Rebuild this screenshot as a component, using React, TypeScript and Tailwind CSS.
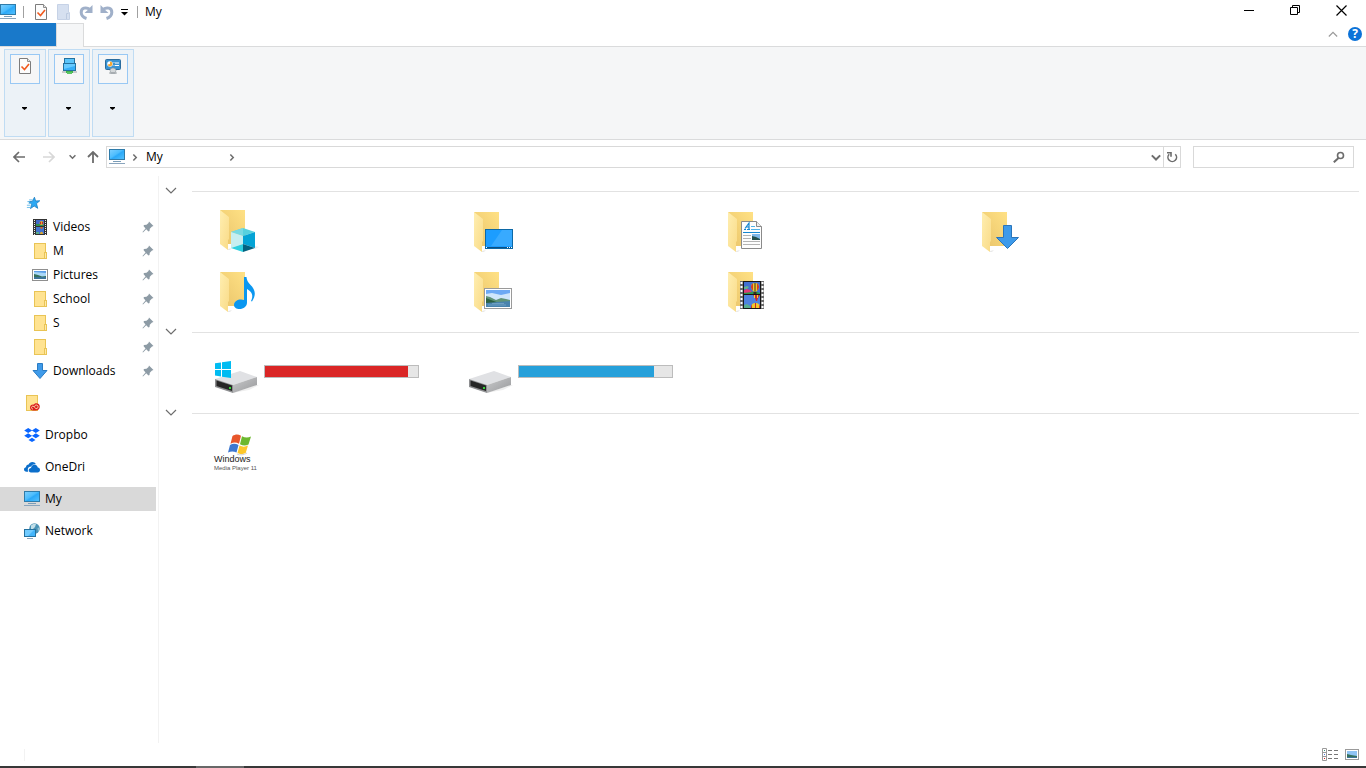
import type { ReactNode } from "react";

/* ---------- small icons ---------- */

function PcIcon() {
  return (
    <svg width="16" height="16" viewBox="0 0 16 16" className="shrink-0">
      <defs>
        <linearGradient id="pcScreen" x1="0" y1="0" x2="1" y2="1">
          <stop offset="0" stopColor="#7fd0ff" />
          <stop offset="0.45" stopColor="#4dbdfd" />
          <stop offset="0.55" stopColor="#2ba9f8" />
          <stop offset="1" stopColor="#55c2ff" />
        </linearGradient>
      </defs>
      <rect x="0.5" y="0.5" width="15" height="10" fill="url(#pcScreen)" stroke="#2f7ba9" />
      <rect x="4" y="12" width="8" height="1" fill="#7a9db8" />
      <rect x="0" y="14" width="16" height="1" fill="#8aa5bd" />
    </svg>
  );
}

function CheckDocIcon() {
  return (
    <svg width="16" height="16" viewBox="0 0 16 16" className="shrink-0">
      <path d="M2.500.5h8l3 3v12h-11z" fill="#fcfcfc" stroke="#7c7c7c" />
      <path d="M10.500.5v3h3" fill="#e8e8e8" stroke="#8e8e8e" />
      <path d="M4.500 8.500l3 3 4.500-5.500" fill="none" stroke="#f1591d" strokeWidth="1.600" />
    </svg>
  );
}

function PaleFolderIcon() {
  return (
    <svg width="16" height="16" viewBox="0 0 16 16">
      <path d="M1.500.5h11v8h1v7h-12z" fill="#d6e0f0" stroke="#c6d2e6" />
      <path d="M10.500 15V9.500h2" fill="none" stroke="#bccae0" />
    </svg>
  );
}

function UndoIcon({ flip = false }: { flip?: boolean }) {
  return (
    <svg width="14" height="16" viewBox="0 0 14 16" className={flip ? "-scale-x-100" : ""}>
      <path d="M3 5.500C7 2.500 12 4 11.800 8.500C11.700 11.500 9.500 13.500 6.500 14.500" fill="none" stroke="#a0b0c9" strokeWidth="3" />
      <path d="M.5 1v8h8l-3-2.800L3 3.500z" fill="#a0b0c9" />
    </svg>
  );
}

function DriveMapIcon() {
  return (
    <svg width="16" height="16" viewBox="0 0 16 16">
      <rect x="3.500" y=".5" width="10" height="5" fill="#5ac4fa" stroke="#24719f" />
      <rect x="2.500" y="5.500" width="12" height="7" fill="#35aef8" stroke="#24719f" />
      <path d="M3 6h11v2L3 11z" fill="#66caff" />
      <rect x="1" y="13" width="15" height="2" fill="#c9cccd" />
      <rect x="5" y="13" width="7" height="2" fill="#3fb54a" />
      <rect x="6" y="14" width="5" height="2" fill="#5cc466" />
    </svg>
  );
}

function SettingsScreenIcon() {
  return (
    <svg width="16" height="16" viewBox="0 0 16 16">
      <rect x=".5" y="1.500" width="15" height="10" rx="1" fill="#3a94d3" stroke="#2b6c9e" />
      <circle cx="5" cy="6" r="2.800" fill="#fff" />
      <path d="M5 6V3.600A2.400 2.400 0 1 1 2.700 6.500z" fill="#f5a733" />
      <path d="M10 5h4M10 7.500h4" stroke="#fff" />
      <path d="M8.500 4.500h1M8.500 7.500h1" stroke="#cbe5f8" />
      <ellipse cx="8" cy="12.500" rx="3" ry="2.500" fill="#d4d8da" stroke="#8b959c" strokeWidth=".6" />
      <ellipse cx="8" cy="15" rx="4" ry="1" fill="#a7adb1" />
    </svg>
  );
}

function StarIcon() {
  return (
    <svg width="16" height="16" viewBox="0 -1 18 18">
      <path d="M9.500 1.500l1.300 4.200 4.700-.2-3.700 3.200 1.400 5.300-4-2.600-4.200 2.900 1.500-5L3 6.500l4.200-.4z" fill="#2ba8f3" stroke="#1b7cc0" strokeWidth=".9" />
      <path d="M3.500 4.500h4M1.500 6.500h3M3 8.500h3M1 10.500h4M1 13h4" stroke="#61b9ea" />
    </svg>
  );
}

function SmallFolderIcon({ children }: { children?: ReactNode }) {
  return (
    <svg width="16" height="16" viewBox="0 0 16 16">
      <rect x="2.500" y=".5" width="11" height="15" fill="#ffe391" stroke="#e9c455" />
      {children ?? <rect x="12.500" y="9.500" width="2" height="6" fill="#ffe9a8" stroke="#e9c455" />}
    </svg>
  );
}

function CreativeCloudIcon() {
  return (
    <SmallFolderIcon>
      <path d="M6 12.500c0-2.500 2-3.500 4-3 1-2 5.800-1.500 5.800 2 0 2.500-1.800 4-4 4H9c-2 0-3-1.200-3-3z" fill="#da1f1f" />
      <path d="M13 13.500c1.500-.5 1.600-3-.2-3.400-1.500-.3-2.300.8-2.300 1.800M9 14c-2 0-2-2.800 0-2.800 1.200 0 2 2.800 4 2.500" fill="none" stroke="#ffe0b0" strokeWidth=".9" />
    </SmallFolderIcon>
  );
}

function Balloon({ x, y }: { x: number; y: number }) {
  return (
    <g transform={`translate(${x} ${y})`}>
      <path d="M-4 0a4 4 0 0 1 8 0c0 2-2 3.500-2.500 4.500h-3C-2 3.500-4 2-4 0z" fill="#f0c92c" />
      <path d="M-4 0c0-2 1-3 2-3.500V3.500C-3 2.500-4 1.500-4 0zM4 0c0-2-1-3-2-3.500V3.500C3 2.500 4 1.500 4 0z" fill="#d33a2a" />
      <path d="M-.5 -4h1v8.500h-1z" fill="#3a2c20" />
      <rect x="-1.500" y="5" width="3" height="2" fill="#3c2a22" />
    </g>
  );
}

function FilmArt() {
  return (
    <>
      <rect x="20" y="13" width="24" height="28" fill="#6a6a6a" />
      <rect x="23" y="13" width="18" height="28" fill="#161616" />
      <path d="M21.500 14v27M42.500 14v27" stroke="#fff" strokeWidth="2" strokeDasharray="2 2" />
      <rect x="24" y="14" width="16" height="12" fill="#416fd2" />
      <rect x="24" y="27" width="16" height="13" fill="#4e82df" />
      <path d="M24 24l4-2 4 2 3-1 5 2v1H24z" fill="#2b9a4a" />
      <path d="M24 22l3-1 3 1 2 2-8 1z" fill="#dd3b78" />
      <path d="M24 19l3-1 2 1-2 2h-3z" fill="#63b38d" />
      <Balloon x={35} y={19} />
      <path d="M33 27h7l-2 3-1 3h-1l-1-3z" fill="#c92a30" />
      <path d="M34 27h1v3h-1zM37 27h1v3h-1z" fill="#f6d62a" />
      <path d="M24 37l3-1 3 2v2h-6z" fill="#58ae91" />
      <path d="M31 40c0-4 2-5 4.500-5s4.500 1 4.500 5z" fill="#f0c92c" />
      <path d="M31 40c0-2 .5-3 1-3.500V40zM35 35h1v5h-1zM39 36.500c.5.500 1 1.500 1 3.500h-1z" fill="#c92a30" />
    </>
  );
}

function VideoIcon() {
  return (
    <svg width="16" height="16" viewBox="0 0 16 16">
      <rect x="1" y="0" width="14" height="16" fill="#333" />
      <path d="M2.500 1v15M13.500 1v15" stroke="#eee" strokeDasharray="1 1" />
      <rect x="4" y="1" width="8" height="6" fill="#4069c9" />
      <rect x="4" y="8" width="8" height="7" fill="#4474cf" />
      <path d="M4 5h4l4 1v1H4z" fill="#2f9150" />
      <circle cx="9.500" cy="4" r="2" fill="#e0a92e" />
      <path d="M8 3h1v2H8zM10 3h1v2h-1z" fill="#c8292d" />
      <path d="M8 8h3l-1 2H9z" fill="#c8692d" />
      <path d="M4 13h3v2H4z" fill="#57a98a" />
      <path d="M8 15c0-3 3-3 3 0z" fill="#e0a92e" />
    </svg>
  );
}

function PictureIcon() {
  return (
    <svg width="16" height="16" viewBox="0 0 16 16">
      <rect x=".5" y="2.500" width="15" height="11" fill="#fff" stroke="#8f8f8f" />
      <rect x="2" y="4" width="12" height="8" fill="#a9d7f7" />
      <path d="M2 4h12v2L2 5z" fill="#5c9ee8" />
      <path d="M2 7l4 1 4 1.500 4-.5v1H2z" fill="#35705c" />
      <path d="M2 10h12v2H2z" fill="#3c7398" />
    </svg>
  );
}

function DownIcon() {
  return (
    <svg width="16" height="16" viewBox="0 0 16 16">
      <path d="M5.500.5h5v7h4.500l-7 8-7-8h4.500z" fill="#3f9bea" stroke="#2a7cc4" />
    </svg>
  );
}

function DropboxIcon() {
  return (
    <svg width="16" height="16" viewBox="0 0 16 16" fill="#0a66ff">
      <path d="M4.200 1l4 2.500-4 2.500-4-2.500zM11.800 1l4 2.500-4 2.500-4-2.500zM4.200 6.300l4 2.500-4 2.500-4-2.500zM11.800 6.300l4 2.500-4 2.500-4-2.500zM8 10.800l3.500 2.100L8 15l-3.500-2.100z" />
      <path d="M8 4.300l3.500 2L8 8.400l-3.500-2.100z" fill="#fff" />
    </svg>
  );
}

function OneDriveIcon() {
  return (
    <svg width="16" height="16" viewBox="0 0 16 16" fill="#0c6fcb">
      <path d="M2.600 12.800C.8 12.800 0 11.500 0 10.300c0-1.200.9-2 2-2.100C2 6.300 3.200 5.500 4.600 5.500c.6-1.600 2-2.500 3.600-2.500 1.800 0 3 .9 3.700 2.300-2.400-.3-4 .6-4.700 2.200-2 0-3.400 1.300-3.400 3 0 .8.100 1.400.4 2.300z" />
      <path d="M7 13.500c-1.500 0-2.300-1-2.300-2.200 0-1.300 1-2.200 2.300-2.300C7.300 6.900 8.800 5.700 10.500 5.700c1.800 0 3 1.200 3.300 2.800 1.400.1 2.200 1.100 2.200 2.500 0 1.500-1 2.500-2.400 2.500z" />
    </svg>
  );
}

function NetworkIcon() {
  return (
    <svg width="16" height="16" viewBox="0 0 16 16">
      <circle cx="10.500" cy="5.500" r="5.200" fill="#4a93b6" />
      <path d="M7 2.500c2-2 4-2 5-1.500l-1 3-2 2-2 .5z" fill="#c3dfe8" />
      <path d="M13.500 5l2-.5v2L14 8.500z" fill="#8fc0d3" />
      <rect x=".5" y="6.500" width="11" height="7" fill="#43b5fb" stroke="#24719f" />
      <path d="M1 7h9L4 13H1z" fill="#71cbff" />
      <path d="M3 15.500h6" stroke="#8aa5bd" />
    </svg>
  );
}

function PinIcon() {
  return (
    <svg width="12" height="12" viewBox="0 0 12 12" className="shrink-0">
      <path d="M7 .5L11.500 5l-1.500.5-2.200 2.200-.3 2.300-1 .5-2.300-2.300L1 11.500l-.5-.5 3-3.500L1.500 5l.5-1 2.500-.2L6.500 2z" fill="#8d9ba5" />
    </svg>
  );
}

/* ---------- large tile icons, all on a 48px board ---------- */

function FolderTile({ lift = false, children }: { lift?: boolean; children: ReactNode }) {
  return (
    <svg width="48" height="48" viewBox="0 0 48 48">
      <defs>
        <linearGradient id="folderBack" x1="0" y1="1" x2="1" y2="0">
          <stop offset="0" stopColor="#e9c46a" />
          <stop offset="1" stopColor="#ffe185" />
        </linearGradient>
        <linearGradient id="folderFront" x1="0" y1="0" x2="1" y2="1">
          <stop offset="0" stopColor="#ffeeb0" />
          <stop offset="1" stopColor="#f9db88" />
        </linearGradient>
      </defs>
      <g transform={lift ? "translate(0 -2)" : undefined}>
        <path d="M16 43l4-1-2 2h-2z" fill="#e9e9e9" />
        <path d="M8 4h25v34H16z" fill="url(#folderBack)" />
        <path d="M8 4l9 7v22l-1 1v10l-8-6z" fill="url(#folderFront)" />
      </g>
      {children}
    </svg>
  );
}

function ObjectsArt() {
  return (
    <>
      <path d="M43 38l4 1-4 2z" fill="#efefef" />
      <path d="M31 20l12 4-12 4-12-4z" fill="#57d1de" />
      <path d="M31 20v8l-12-4z" fill="#79d9e2" />
      <path d="M19 24l12 4v8l-12 4z" fill="#c7eef0" />
      <path d="M31 28l12-4v16l-12-4z" fill="#04a3d5" />
      <path d="M19 40l12-4v8z" fill="#2fcfdf" />
      <path d="M31 36l12 4-12 4z" fill="#04617f" />
    </>
  );
}

function DesktopArt() {
  return (
    <>
      <rect x="19.500" y="21.500" width="27" height="19" fill="#1c9dff" stroke="#0c68a6" />
      <path d="M36 22h10v16H25z" fill="#38aaff" />
      <path d="M20 39.500h26" stroke="#0b4f84" />
      <path d="M20 39.500h1M41 39.500h1M43 39.500h1M45 39.500h1" stroke="#fff" />
    </>
  );
}

function DocumentArt() {
  return (
    <>
      <path d="M21.500 13.500h15l5 5v22h-20z" fill="#fdfdfd" stroke="#8a8a8a" />
      <path d="M36.500 13.500v5h5" fill="#eee" stroke="#8a8a8a" />
      <path d="M24 21.500h2M27 21.500h3M25 20.500l4-5.500v6M26 19h3" fill="none" stroke="#1687d0" strokeWidth="1.200" />
      <path d="M31 18.500h4M31 21.500h9" stroke="#4fb2e8" />
      <path d="M23 24.500h17" stroke="#1687d0" />
      <path d="M23 27.500h8M23 30.500h8M23 33.500h17M23 36.500h17" stroke="#b4b4b4" />
      <rect x="32" y="26" width="8" height="6" fill="#7fb7e8" />
      <path d="M32 28l4 1 4 2v1h-8z" fill="#24504c" />
    </>
  );
}

function DownloadArt() {
  return <path d="M29.500 17.500h8v12h7l-11 11-11-11h7z" fill="#3d9aea" stroke="#2a75bb" />;
}

function MusicArt() {
  return (
    <path d="M32 9h2.500c.5 5 3 6.500 5.500 9.500 3.500 4.500 4 9 0 15l-1-.5c2.500-5 1.500-9-4-12v13.500c0 4-3.500 6.500-7.500 6.500-3 0-5.500-1.500-5.500-4 0-3.500 3.500-5.500 7-5.500 1.200 0 2.200.2 3 .6z" fill="#0a97f0" />
  );
}

function PicturesArt() {
  return (
    <>
      <rect x="18.500" y="20.500" width="27" height="20" fill="#fff" stroke="#9a9a9a" />
      <rect x="20" y="22" width="24" height="17" fill="#6ca9f4" />
      <path d="M20 26l6-1 9 2 9-2v7H20z" fill="#cfe6fb" />
      <path d="M20 28l4 1 6 3 5-2 5 1 4 1v2H20z" fill="#5f9378" />
      <path d="M20 30l5 2 8 3H20z" fill="#2c6142" />
      <path d="M20 35l24-2v6H20z" fill="#4983ad" />
      <path d="M22 37h18M26 35.500h12" stroke="#6e9fc3" />
    </>
  );
}

function DriveIcon({ system = false }: { system?: boolean }) {
  return (
    <svg width="48" height="48" viewBox="0 0 48 48">
      <defs>
        <linearGradient id="driveSide" x1="0" y1="0" x2="1" y2="1">
          <stop offset="0" stopColor="#c9cacb" />
          <stop offset="1" stopColor="#98999b" />
        </linearGradient>
      </defs>
      <path d="M20 44l25-8 2 0-10 5z" fill="#eeeeee" />
      <path d="M3 30l25-8 17 6-24 8z" fill="#e0e1e4" />
      <path d="M21 36l24-8v8l-24 8z" fill="url(#driveSide)" />
      <path d="M3 30l18 6v8L3 38z" fill="#8e8f91" />
      <path d="M4.500 31.500l15.500 5v5.500L4.500 37z" fill="#262626" />
      <rect x="17" y="38" width="2" height="2" fill="#35d435" />
      {system && (
        <path d="M3 14.300L9 13.400V20H3zM10 13.200L19 12v8h-9zM3 21h6v6.500l-6-.9zM10 21h9v8l-9-1.300z" fill="#00bcf2" />
      )}
    </svg>
  );
}

function MediaPlayerIcon() {
  return (
    <svg width="48" height="48" viewBox="0 0 48 48" className="font-['Liberation_Sans',sans-serif]">
      <path d="M20.500 6c3-2 5.500-2 8.500-.3l-2 8c-3-1.500-5.500-1.500-8.500 0z" fill="#e8562b" />
      <path d="M30 6.200c3 1.600 6 1.600 9 .3l-2.500 8c-3 1.500-5.500 1.300-8.500-.3z" fill="#6cb82e" />
      <path d="M18 15c3-1.700 5.500-1.500 8.500 0l-2 7.500c-3-1.500-5.500-1.500-8.500 0z" fill="#3e78d0" />
      <path d="M27.500 15.500c3 1.500 5.500 1.500 8.500 0l-2.300 7.500c-3 1.500-5.500 1.500-8.200 0z" fill="#fcc72c" />
      <path d="M25 24c3 1.500 7 1 10-1" fill="none" stroke="#d5d5d5" />
      <text x="2" y="32" fontSize="9" fill="#222">Windows</text>
      <text x="2" y="40" fontSize="6" fill="#555">Media Player 11</text>
    </svg>
  );
}

/* ---------- page pieces ---------- */

function Chevron({ dir, size = 6, color = "#6d6d6d", weight = 1 }: { dir: "down" | "up" | "right"; size?: number; color?: string; weight?: number }) {
  const paths = { down: "M0 3l5 5 5-5", up: "M0 8l5-5 5 5", right: "M3 0l5 5-5 5" };
  return (
    <svg width={size} height={size} viewBox="-1 -1 12 12" className="shrink-0">
      <path d={paths[dir]} fill="none" stroke={color} strokeWidth={(weight * 12) / size} />
    </svg>
  );
}

const ribbonGroups = [
  { label: "Properties", icon: <CheckDocIcon /> },
  { label: "Map network drive", icon: <DriveMapIcon /> },
  { label: "Open settings", icon: <SettingsScreenIcon /> },
];

const quickAccess = [
  { id: "videos", text: "Videos", icon: <VideoIcon /> },
  { id: "m", text: "M", icon: <SmallFolderIcon /> },
  { id: "pictures", text: "Pictures", icon: <PictureIcon /> },
  { id: "school", text: "School", icon: <SmallFolderIcon /> },
  { id: "s", text: "S", icon: <SmallFolderIcon /> },
  { id: "folder", text: "", icon: <SmallFolderIcon /> },
  { id: "downloads", text: "Downloads", icon: <DownIcon /> },
];

const places = [
  { id: "cloud", text: "", icon: <CreativeCloudIcon /> },
  { id: "dropbox", text: "Dropbo", icon: <DropboxIcon /> },
  { id: "onedrive", text: "OneDri", icon: <OneDriveIcon /> },
  { id: "my", text: "My", icon: <PcIcon />, active: true },
  { id: "network", text: "Network", icon: <NetworkIcon /> },
];

const folders = [
  { label: "3D Objects", icon: <FolderTile lift><ObjectsArt /></FolderTile> },
  { label: "Desktop", icon: <FolderTile><DesktopArt /></FolderTile> },
  { label: "Documents", icon: <FolderTile><DocumentArt /></FolderTile> },
  { label: "Downloads", icon: <FolderTile><DownloadArt /></FolderTile> },
  { label: "Music", icon: <FolderTile><MusicArt /></FolderTile> },
  { label: "Pictures", icon: <FolderTile><PicturesArt /></FolderTile> },
  { label: "Videos", icon: <FolderTile><FilmArt /></FolderTile> },
];

function TitleBar() {
  return (
    <header className="flex h-[23px] items-center">
      <PcIcon />
      <div className="ml-[7px] h-3 w-px bg-[#a0a0a0]" />
      <div className="ml-[9px] flex items-center gap-[7px]">
        <button aria-label="Properties"><CheckDocIcon /></button>
        <button aria-label="New folder"><PaleFolderIcon /></button>
        <button aria-label="Redo"><UndoIcon flip /></button>
        <button aria-label="Undo"><UndoIcon /></button>
        <button aria-label="Customize toolbar">
          <svg width="8" height="8" viewBox="0 0 8 8">
            <path d="M0 1.500h7" stroke="#000" />
            <path d="M0 4h7L3.500 7.500z" />
          </svg>
        </button>
      </div>
      <div className="ml-2 h-3 w-px bg-[#a0a0a0]" />
      <h1 className="ml-[7px]">My</h1>
      <div className="mr-0.5 ml-auto flex self-start">
        <button aria-label="Minimize" className="flex h-[21px] w-[46px] items-center justify-center">
          <svg width="10" height="11" viewBox="0 0 10 11"><path d="M0 5.500h10" stroke="#000" /></svg>
        </button>
        <button aria-label="Restore" className="flex h-[21px] w-[46px] items-center justify-center">
          <svg width="10" height="11" viewBox="0 0 10 11" fill="none" stroke="#000">
            <path d="M.5 2.500h7v7h-7zM2.500 2.500v-2h7v7h-2" />
          </svg>
        </button>
        <button aria-label="Close" className="flex h-[21px] w-[46px] items-center justify-center">
          <svg width="11" height="11" viewBox="0 0 11 11"><path d="M.5.5l10 10M10.500.5l-10 10" stroke="#000" strokeWidth="1.200" /></svg>
        </button>
      </div>
    </header>
  );
}

function Ribbon() {
  return (
    <>
      <div className="flex h-6 border-b border-[#dadbdc]">
        <button aria-label="File" className="h-[23px] w-14 bg-[#1979ca]" />
        <button aria-label="Computer" className="-mb-px h-6 w-7 border-x border-t border-[#dadbdc] bg-[#f5f6f7]" />
        <div className="mr-1 ml-auto flex items-center gap-2.5 pb-px">
          <button aria-label="Collapse ribbon"><Chevron dir="up" size={10} color="#9a9a9a" weight={1.2} /></button>
          <button aria-label="Help" className="flex size-3.5 items-center justify-center rounded-full bg-[#0b72d8] text-xs leading-3 font-bold text-white">?</button>
        </div>
      </div>
      <div className="flex gap-0.5 border-b border-[#dadbdc] bg-[#f5f6f7] px-1 py-0.5">
        {ribbonGroups.map((g) => (
          <button key={g.label} aria-label={g.label} className="flex h-[88px] w-[42px] flex-col items-center border border-[#c0dcf3] bg-[#ecf2f7] pt-1">
            <span className="flex h-[30px] w-[30px] justify-center border border-[#98c8f4] bg-[#f5f6f7] pt-[3px]">{g.icon}</span>
            <svg width="5" height="3" viewBox="0 0 5 3" className="mt-[23px] mr-px"><path d="M0 0h5v1L2.500 3 0 1z" /></svg>
          </button>
        ))}
      </div>
    </>
  );
}

function AddressBar() {
  return (
    <div className="flex h-9 items-start pt-1.5 pr-3 pl-1">
      <button aria-label="Back" className="flex h-[22px] w-[30px] items-center justify-center">
        <svg width="12" height="12" viewBox="0 0 12 12" fill="none" stroke="#6c6c6c" strokeWidth="1.700"><path d="M12 6H1M6 1L1 6l5 5" /></svg>
      </button>
      <button aria-label="Forward" className="flex h-[22px] w-[30px] items-center justify-center">
        <svg width="12" height="12" viewBox="0 0 12 12" fill="none" stroke="#d8d8d8" strokeWidth="1.700"><path d="M0 6h11M6 1l5 5-5 5" /></svg>
      </button>
      <button aria-label="Recent locations" className="flex h-[22px] w-4 items-center justify-center pb-0.5"><Chevron dir="down" size={7} weight={1.5} /></button>
      <button aria-label="Up" className="flex h-[22px] w-[26px] items-center justify-center">
        <svg width="12" height="12" viewBox="0 0 12 12" fill="none" stroke="#6c6c6c" strokeWidth="1.800"><path d="M6 12V1M1 6l5-5 5 5" /></svg>
      </button>
      <nav aria-label="Address" className="flex h-[22px] min-w-0 flex-1 items-center border border-[#d9d9d9] pl-0.5">
        <PcIcon />
        <div className="flex w-[18px] justify-center"><Chevron dir="right" size={7} weight={1.5} /></div>
        <a href="#my" className="ml-[3px] w-[82px]">My</a>
        <Chevron dir="right" size={7} weight={1.5} />
        <button aria-label="Previous locations" className="ml-auto flex h-5 w-3.5 items-center justify-center"><Chevron dir="down" size={10} weight={2} /></button>
        <button aria-label="Refresh" className="flex h-5 w-[17px] items-center justify-center border-l border-[#d9d9d9]">
          <svg width="12" height="12" viewBox="0 0 12 12" fill="none" stroke="#6c6c6c" strokeWidth="1.600">
            <path d="M9.300 3.200A4.300 4.300 0 1 1 3.200 3.200M1 1.800h4v4" />
          </svg>
        </button>
      </nav>
      <div className="ml-3 flex h-[22px] w-[161px] items-center border border-[#d9d9d9] pr-2">
        <input type="text" aria-label="Search" className="min-w-0 flex-1 px-2 outline-none" />
        <svg width="12" height="12" viewBox="0 0 12 12" fill="none" stroke="#6c6c6c">
          <circle cx="7.500" cy="4.500" r="3" strokeWidth="1.600" />
          <path d="M5.500 7L.8 11.300" strokeWidth="2" />
        </svg>
      </div>
    </div>
  );
}

function Sidebar() {
  return (
    <nav className="flex w-[159px] shrink-0 flex-col gap-2 border-r border-[#f2f2f2] pt-[15px] pr-0.5">
      <div>
        <a href="#quick" aria-label="Quick access" className="flex h-6 items-center pl-[26px]"><StarIcon /></a>
        {quickAccess.map((item) => (
          <a key={item.id} href={`#${item.id}`} className="flex h-6 items-center gap-[5px] pr-0.5 pl-8">
            {item.icon}
            <span className="flex-1">{item.text}</span>
            <PinIcon />
          </a>
        ))}
      </div>
      {places.map((item) => (
        <a key={item.id} href={`#${item.id}`} className={`flex h-6 items-center gap-[5px] pl-6 ${item.active ? "bg-[#d9d9d9]" : ""}`}>
          {item.icon}
          {item.text}
        </a>
      ))}
    </nav>
  );
}

function Section({ label, children }: { label: string; children: ReactNode }) {
  return (
    <section className="pb-px">
      <div className="flex h-8 items-center pr-[7px] pb-px pl-1.5">
        <button aria-label={label} className="mr-[15px] pb-[3px]"><Chevron dir="down" size={12} weight={1.2} /></button>
        <div className="h-px flex-1 bg-[#e2e2e2]" />
      </div>
      <div className="grid grid-cols-[repeat(auto-fill,254px)] gap-y-3 pl-[53px]">{children}</div>
    </section>
  );
}

function Drive({ label, used, color, system }: { label: string; used: number; color: string; system?: boolean }) {
  return (
    <div className="flex h-12 gap-1">
      <DriveIcon system={system} />
      <div role="meter" aria-label={label} aria-valuenow={used} className="mt-4 h-[13px] w-[155px] border border-[#bcbcbc] bg-[#e6e6e6]">
        <div className={`h-full ${color}`} style={{ width: `${used}%` }} />
      </div>
    </div>
  );
}

export default function App() {
  return (
    <div className="flex min-h-screen flex-col bg-white font-['Open_Sans','Noto_Sans',sans-serif] text-xs text-black">
      <TitleBar />
      <Ribbon />
      <AddressBar />
      <div className="flex flex-1">
        <Sidebar />
        <main className="min-w-0 flex-1">
          <Section label="Folders">
            {folders.map((f) => (
              <button key={f.label} aria-label={f.label} className="flex h-12">{f.icon}</button>
            ))}
          </Section>
          <Section label="Devices and drives">
            <Drive label="System drive" used={93.5} color="bg-[#da2626]" system />
            <Drive label="Data drive" used={88.5} color="bg-[#26a0da]" />
          </Section>
          <Section label="Network locations">
            <button aria-label="Media player" className="flex h-12"><MediaPlayerIcon /></button>
          </Section>
        </main>
      </div>
      <footer className="flex h-[23px] items-center pr-[7px] pl-6">
        <div className="h-3 w-px bg-[#f2f2f2]" />
        <button aria-label="Details view" className="ml-auto">
          <svg width="16" height="13" viewBox="0 0 16 13">
            <path d="M.5.5h4v12h-4zM.5 4.500h4M.5 8.500h4" fill="#fff" stroke="#9a9a9a" />
            <path d="M6 2.500h4M12 2.500h4M6 6.500h4M12 6.500h4M6 10.500h4M12 10.500h4" stroke="#777" />
            <path d="M2 2.500h1" stroke="#3d9a7a" />
            <path d="M2 6.500h1" stroke="#4a7de0" />
            <path d="M2 10.500h1" stroke="#d01f1f" />
          </svg>
        </button>
        <button aria-label="Large icons view" className="ml-[7px]">
          <svg width="14" height="12" viewBox="0 0 14 12">
            <rect x=".5" y=".5" width="13" height="10" fill="#fff" stroke="#9a9a9a" />
            <rect x="2" y="2" width="10" height="7" fill="#8fc4f5" />
            <path d="M2 5l4 1 6 1v2H2z" fill="#35705c" />
            <path d="M2 8h10v1H2z" fill="#3c7398" />
          </svg>
        </button>
      </footer>
      <div className="flex h-0.5 bg-[#383838] pl-[196px]">
        <div className="h-0.5 w-12 bg-[#686868]" />
      </div>
    </div>
  );
}
